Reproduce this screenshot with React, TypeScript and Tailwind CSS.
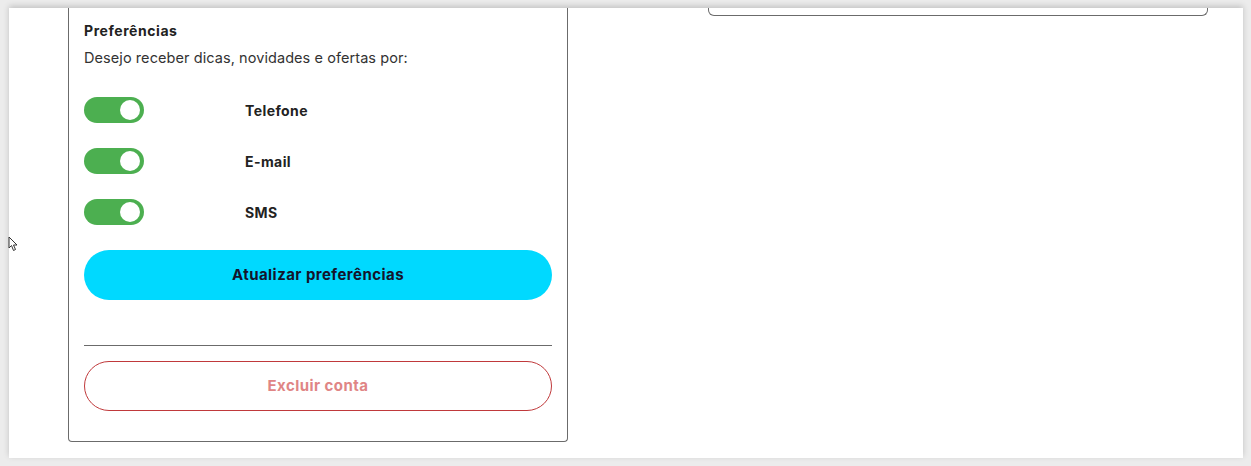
import React, { useState } from 'react';

type Channel = { id: string; label: string };

const channels: Channel[] = [
  { id: 'phone', label: 'Telefone' },
  { id: 'email', label: 'E-mail' },
  { id: 'sms', label: 'SMS' },
];

const Toggle: React.FC<{ on: boolean; onChange: () => void }> = ({ on, onChange }) => (
  <button
    type="button"
    onClick={onChange}
    className={`relative h-[26px] w-[60px] shrink-0 rounded-full transition-colors ${
      on ? 'bg-[#4caf50]' : 'bg-[#cfcfcf]'
    }`}
  >
    <span
      className={`absolute top-[3px] h-[20px] w-[20px] rounded-full bg-white transition-all ${
        on ? 'left-[36px]' : 'left-[4px]'
      }`}
    />
  </button>
);

export default function App() {
  const [prefs, setPrefs] = useState<Record<string, boolean>>({
    phone: true,
    email: true,
    sms: true,
  });

  const toggle = (id: string) => setPrefs((p) => ({ ...p, [id]: !p[id] }));

  return (
    <div
      className="relative h-[466px] w-full overflow-hidden bg-[#ececec] pb-[8px] pl-[9px] pr-[8px] pt-[8px]"
      style={{ fontFamily: 'Inter, "Open Sans", sans-serif' }}
    >
      <div className="flex h-full items-start gap-[140px] bg-white pl-[59px] shadow-[0_-2px_6px_rgba(0,0,0,0.18)]">
        {/* preferences card, scrolled so its top edge is out of view */}
        <div className="flex w-[500px] flex-col rounded-b-[4px] border-x border-b border-[#6b6b6b] px-[15px] pb-[30px] pt-[13px]">
          <h3 className="text-[14px] font-bold leading-[20px] tracking-[0.04em] text-[#222]">Preferências</h3>
          <p className="mt-[7px] text-[14.5px] leading-[20px] tracking-[0.005em] text-[#333]">
            Desejo receber dicas, novidades e ofertas por:
          </p>

          <div className="mt-[29px] flex flex-col gap-[25px]">
            {channels.map((c) => (
              <div key={c.id} className="flex items-center gap-[101px]">
                <Toggle on={prefs[c.id]} onChange={() => toggle(c.id)} />
                <span className="text-[14px] font-bold tracking-[0.03em] text-[#222]">{c.label}</span>
              </div>
            ))}
          </div>

          <button
            type="button"
            className="mt-[25px] h-[50px] w-full rounded-full bg-[#00d9ff] text-[15px] font-bold tracking-[0.03em] text-[#14142b]"
          >
            Atualizar preferências
          </button>

          <hr className="mt-[45px] border-0 border-t border-[#6b6b6b]" />

          <button
            type="button"
            className="mt-[15px] h-[50px] w-full rounded-full border border-[#c0393b] bg-white text-[15px] font-bold tracking-[0.03em] text-[#e08585]"
          >
            Excluir conta
          </button>
        </div>

        {/* neighbouring card, only its bottom edge shows */}
        <div className="h-[8px] w-[500px] rounded-b-[6px] border-x border-b border-[#6b6b6b]" />
      </div>

      {/* mouse pointer */}
      <svg className="absolute left-[8px] top-[236px]" width="10" height="16" viewBox="0 0 10 16">
        <path d="M1 1 L1 12 L3.5 9.5 L5.5 14.5 L7.5 13.5 L5.5 9 L9 9 Z" fill="white" stroke="#333" strokeWidth="1" />
      </svg>
    </div>
  );
}
